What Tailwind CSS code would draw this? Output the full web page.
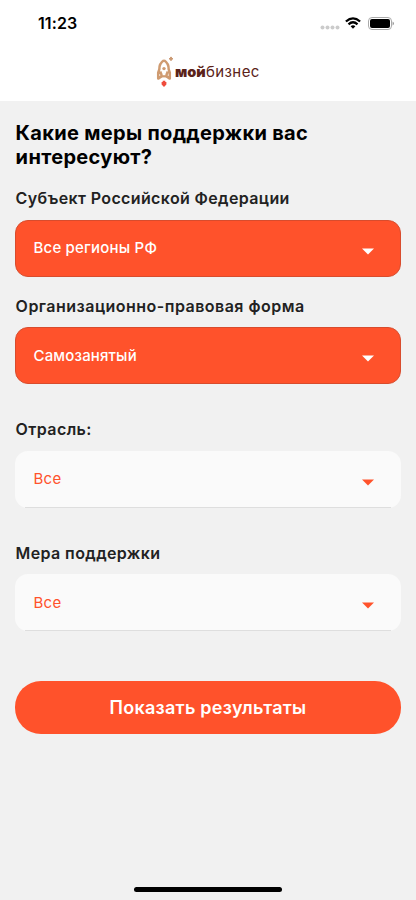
<!DOCTYPE html>
<html lang="ru">
<head>
<meta charset="utf-8">
<meta name="viewport" content="width=device-width, initial-scale=1">
<title>Мой бизнес</title>
<script src="https://cdn.jsdelivr.net/npm/@tailwindcss/browser@4"></script>
</head>
<body class="bg-[#f1f1f1] font-['Inter',sans-serif] overflow-hidden">
<div class="flex flex-col w-[416px] h-[900px]">
  <header class="flex flex-col h-[101px] shrink-0 bg-white">
    <div class="flex items-center justify-between h-[46px] pl-[38px] pr-[22px]">
      <span class="text-[16px] leading-5 font-semibold text-black tracking-[0.1px]">11:23</span>
      <div class="flex items-center">
        <svg class="w-5 h-[5px] mt-2 mr-[5px]" viewBox="0 0 20 5" fill="#cbcbcb"><circle cx="2.5" cy="2.5" r="2"/><circle cx="7.5" cy="2.5" r="2"/><circle cx="12.5" cy="2.5" r="2"/><circle cx="17.5" cy="2.5" r="2"/></svg>
        <svg class="w-4 h-3 mr-[7px]" viewBox="0 0 16 12"><g fill="none" stroke="#000" stroke-width="2.3"><path d="M.9 4.5Q8-1.7 15.1 4.5"/><path d="M3.5 7.3Q8 3.3 12.5 7.3"/></g><path d="M5.6 9.3Q8 7.3 10.4 9.3L8 11.8Z"/></svg>
        <svg class="w-[26px] h-[13px]" viewBox="0 0 26 13"><rect x=".5" y=".5" width="23" height="12" rx="3.5" fill="#fff" stroke="#aaa"/><rect x="2" y="2" width="20" height="9" rx="2"/><path d="M24.6 4.5q1.2.6 1.2 2t-1.2 2z" fill="#888"/></svg>
      </div>
    </div>
    <div class="flex items-center h-[52px] pl-[156px]">
      <svg class="w-[18px] h-8 shrink-0" viewBox="0 0 18 32">
        <path d="M8 4.2C4.7 6.4 3.1 9.4 3.3 13.4L2.2 16.6V22.6L5.4 20.4V18.4L4.2 15.6M8 4.2C11.3 6.4 12.9 9.4 12.7 13.4L13.8 16.6V22.6L10.6 20.4V18.4L11.8 15.6" fill="none" stroke="#cf9b71" stroke-width="2.5" stroke-linejoin="round"/>
        <circle cx="8" cy="12.6" r="1.7" fill="#cf9b71"/>
        <path d="M5 19.2H11V21.4H5Z" fill="#cf9b71"/>
        <path d="M15 .9l.6 1.3 1.3.6-1.3.6L15 4.7l-.6-1.3-1.3-.6 1.3-.6Z" fill="#c8936a" stroke="#c8936a" stroke-width="1"/>
        <path d="M6.7 24.8H9.3V26H10.4V28.4L8 31 5.6 28.4V26H6.7Z" fill="#ef4b3c"/>
      </svg>
      <span class="flex items-baseline ml-px text-[#5b2319] leading-5 whitespace-nowrap"><span class="w-[31px] text-[14.5px] font-black tracking-[-0.1px]">мой</span><span class="text-[15px] tracking-[0.4px]">бизнес</span></span>
    </div>
  </header>
  <main class="flex flex-col pl-[15px] pr-[15px] pt-5">
    <h1 class="text-[20px] leading-6 font-bold text-black tracking-[0.32px] pl-px -ml-[0.4px]">Какие меры поддержки вас<br>интересуют?</h1>
    <h2 class="mt-[19px] text-[16px] leading-5 font-semibold text-[#222] tracking-[0.37px] pl-px -ml-[0.4px]">Субъект Российской Федерации</h2>
    <div class="mt-3 flex items-center justify-between h-[57px] rounded-[13px] bg-[#ff522b] border border-[#d84c2d] pl-[17.5px] pr-[26.5px] text-white">
      <span class="text-[15px] font-medium tracking-[0.2px]">Все регионы РФ</span>
      <svg class="w-3 h-[7px] mt-1.5" viewBox="0 0 12 7" fill="currentColor"><path d="M0 .5H12L6 6.5Z"/></svg>
    </div>
    <h2 class="mt-[19px] text-[16px] leading-5 font-semibold text-[#222] tracking-[0.48px] pl-px -ml-[0.4px]">Организационно-правовая форма</h2>
    <div class="mt-[11px] flex items-center justify-between h-[57px] rounded-[13px] bg-[#ff522b] border border-[#d84c2d] pl-[17.5px] pr-[26.5px] text-white">
      <span class="text-[15px] font-medium tracking-[0.15px] pt-px">Самозанятый</span>
      <svg class="w-3 h-[7px] mt-1.5" viewBox="0 0 12 7" fill="currentColor"><path d="M0 .5H12L6 6.5Z"/></svg>
    </div>
    <h2 class="mt-[35px] text-[16px] leading-5 font-semibold text-[#222] tracking-[0.4px] pl-px -ml-[0.4px]">Отрасль:</h2>
    <div class="mt-3 relative flex items-center justify-between h-[57px] rounded-[13px] bg-[#fafafa] pl-[18.5px] pr-[27.5px] text-[#ff522b]">
      <span class="text-[15px] tracking-[0.3px]">Все</span>
      <svg class="w-3 h-[7px] mt-1.5" viewBox="0 0 12 7" fill="currentColor"><path d="M0 .5H12L6 6.5Z"/></svg>
      <i class="absolute bottom-0 inset-x-[10px] h-px bg-[#dedede]"></i>
    </div>
    <h2 class="mt-[35px] text-[16px] leading-5 font-semibold text-[#222] tracking-[0.38px] pl-px -ml-[0.4px]">Мера поддержки</h2>
    <div class="mt-[11px] relative flex items-center justify-between h-[57px] rounded-[13px] bg-[#fafafa] pl-[18.5px] pr-[27.5px] text-[#ff522b]">
      <span class="text-[15px] tracking-[0.3px] pt-px">Все</span>
      <svg class="w-3 h-[7px] mt-1.5" viewBox="0 0 12 7" fill="currentColor"><path d="M0 .5H12L6 6.5Z"/></svg>
      <i class="absolute bottom-0 inset-x-[10px] h-px bg-[#dedede]"></i>
    </div>
    <button class="mt-[50px] h-[53px] rounded-[26px] bg-[#ff522b] text-white text-[18px] font-semibold tracking-[0.25px]">Показать результаты</button>
  </main>
  <div class="mt-auto mb-2 ml-[134px] w-[148px] h-[5px] shrink-0 rounded-full bg-black"></div>
</div>
</body>
</html>
